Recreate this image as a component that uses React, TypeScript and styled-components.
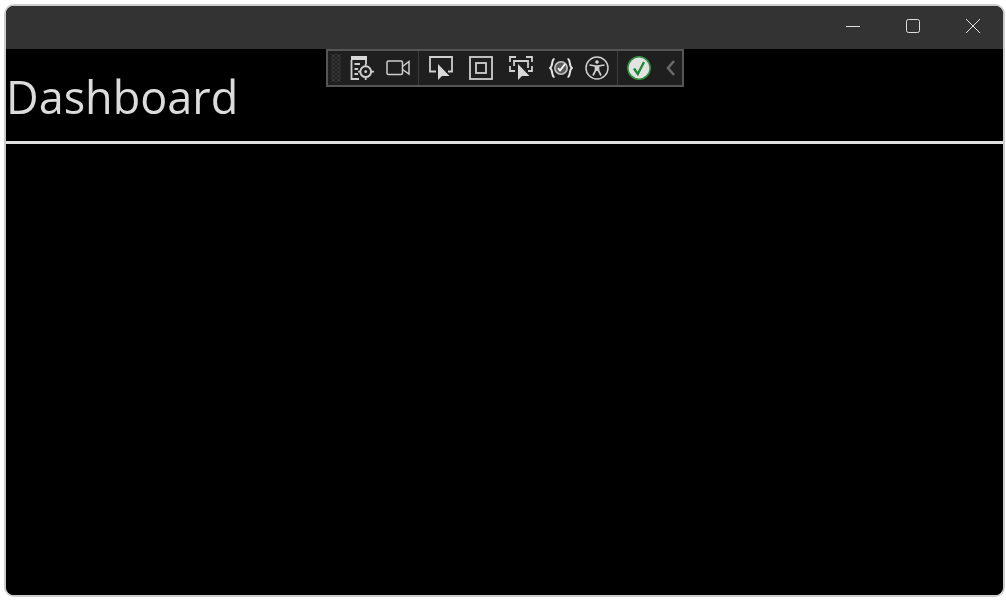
import styled, { createGlobalStyle } from "styled-components";

const GlobalStyle = createGlobalStyle`
  html, body {
    margin: 0;
    padding: 0;
    height: 100%;
    background: #ffffff;
    overflow: hidden;
  }
`;

const Page = styled.div`
  width: 1006px;
  height: 601px;
  box-sizing: border-box;
  padding: 4px 1px 4px 4px;
  display: flex;
`;

const Window = styled.div`
  position: relative;
  flex: 1;
  display: flex;
  flex-direction: column;
  box-sizing: border-box;
  border: 2px solid #cccccc;
  border-radius: 10px;
  background: #000000;
  overflow: hidden;
`;

const TitleBar = styled.div`
  height: 43px;
  flex-shrink: 0;
  background: #333333;
  display: flex;
  justify-content: flex-end;
`;

const WindowButton = styled.div`
  width: 60px;
  height: 40px;
  display: flex;
  align-items: center;
  justify-content: center;
  svg {
    width: 16px;
    height: 16px;
    stroke: #e0e0e0;
    stroke-width: 1;
    fill: none;
  }
`;

const Content = styled.div`
  flex: 1;
  background: #000000;
`;

const Heading = styled.h1`
  margin: 0;
  height: 95px;
  box-sizing: border-box;
  padding: 17px 0 0 0;
  border-bottom: 3px solid #e0e0e0;
  font-family: "Open Sans", "Noto Sans", sans-serif;
  font-size: 45px;
  line-height: 61px;
  font-weight: 400;
  color: #dcdcdc;
`;

const HeadingText = styled.span`
  display: inline-block;
  will-change: transform;
`;

const DebugToolbar = styled.div`
  position: absolute;
  left: 320px;
  top: 43px;
  width: 358px;
  height: 38px;
  box-sizing: border-box;
  border: 2px solid #555555;
  background: #1f1f1f;
  display: flex;
  align-items: center;
  padding-left: 3px;
`;

const Grip = styled.div`
  width: 10px;
  height: 28px;
  flex-shrink: 0;
  background-image:
    radial-gradient(circle, #3c3c3c 1px, transparent 1.3px),
    radial-gradient(circle, #3c3c3c 1px, transparent 1.3px);
  background-size: 5px 4px;
  background-position: 0 0, 2.5px 2px;
`;

const ToolIcon = styled.svg<{ $gap: number }>`
  width: 24px;
  height: 24px;
  flex-shrink: 0;
  margin-left: ${({ $gap }) => $gap}px;
  fill: none;
  stroke: #cfcfcf;
  stroke-width: 1.8;
`;

const Separator = styled.div<{ $gap: number }>`
  width: 1px;
  height: 34px;
  flex-shrink: 0;
  margin-left: ${({ $gap }) => $gap}px;
  background: #3d3d3d;
`;

const Cursor = () => <path d="M9 8 L9 24 L13 20 L20.5 20 Z" fill="#d8d8d8" stroke="none" />;

export default function App() {
  return (
    <>
      <GlobalStyle />
      <Page>
        <Window>
          <TitleBar>
            <WindowButton>
              <svg viewBox="0 0 16 16">
                <path d="M1 8.5 H15" />
              </svg>
            </WindowButton>
            <WindowButton>
              <svg viewBox="0 0 16 16">
                <rect x="1.5" y="1.5" width="13" height="13" rx="2" />
              </svg>
            </WindowButton>
            <WindowButton>
              <svg viewBox="0 0 16 16">
                <path d="M1 1 L15 15 M15 1 L1 15" />
              </svg>
            </WindowButton>
          </TitleBar>
          <Content>
            <Heading>
              <HeadingText>Dashboard</HeadingText>
            </Heading>
          </Content>
          <DebugToolbar>
            <Grip />
            <ToolIcon $gap={9} viewBox="0 0 24 24">
              <path d="M1.5 4 V23 H9" />
              <path d="M16 4 V8" />
              <rect x="1" y="0" width="16" height="4" fill="#d8d8d8" stroke="none" />
              <path d="M4.5 8 H10 M4.5 13 H8 M4.5 18 H8" />
              <circle cx="15.7" cy="15.7" r="5.4" strokeWidth="2" />
              <circle cx="15.7" cy="15.7" r="1.4" fill="#d8d8d8" stroke="none" />
              <path d="M15.7 8 V11 M15.7 20.5 V24 M8 15.7 H11 M20.5 15.7 H24" />
            </ToolIcon>
            <ToolIcon $gap={12} viewBox="0 0 24 24">
              <rect x="1" y="5" width="15.5" height="13.5" rx="1.5" strokeWidth="1.5" />
              <path d="M16.5 10.5 L23 5.5 V18 L16.5 13.5" strokeWidth="1.5" />
            </ToolIcon>
            <Separator $gap={8} />
            <ToolIcon $gap={10} viewBox="0 0 24 24">
              <path d="M7 15.5 H1 V1 H23 V15.5 H19" />
              <Cursor />
            </ToolIcon>
            <ToolIcon $gap={16} viewBox="0 0 24 24">
              <rect x="1" y="1" width="22" height="22" />
              <rect x="7" y="7" width="10" height="10" />
            </ToolIcon>
            <ToolIcon $gap={16} viewBox="0 0 24 24">
              <path d="M1 6 V1 H7 M17 1 H23 V6 M1 10 V15 H6 M23 10 V15 H19" />
              <path d="M5 10 V5 H19 V12" />
              <Cursor />
            </ToolIcon>
            <ToolIcon $gap={16} viewBox="0 0 24 24">
              <path d="M5.5 3 C2 3 4.5 10 1 12 C4.5 14 2 21 5.5 21" stroke="#e6e6e6" strokeWidth="2" />
              <path d="M18.5 3 C22 3 19.5 10 23 12 C19.5 14 22 21 18.5 21" stroke="#e6e6e6" strokeWidth="2" />
              <circle cx="12" cy="12" r="6.2" fill="#5a5a5a" stroke="#c4c4c4" strokeWidth="1.6" />
              <path d="M9 12 L11 14.5 L16 8" stroke="#ffffff" />
            </ToolIcon>
            <ToolIcon $gap={12} viewBox="0 0 24 24">
              <circle cx="12" cy="12" r="11" strokeWidth="1.5" />
              <circle cx="12" cy="6" r="1.8" fill="#d8d8d8" stroke="none" />
              <path d="M4.5 9 L10.5 10 V14.5 L8 19.5 M19.5 9 L13.5 10 V14.5 L16 19.5 M10.5 10 H13.5 M12 10 V15" strokeWidth="1.7" />
            </ToolIcon>
            <Separator $gap={8} />
            <ToolIcon $gap={9} viewBox="0 0 24 24">
              <circle cx="12" cy="12" r="11.2" fill="#e2e2e2" stroke="#2f8f3e" strokeWidth="1.6" />
              <path d="M7 12.5 L10.8 18 L17 6" stroke="#1f8a34" strokeWidth="2.4" />
            </ToolIcon>
            <ToolIcon $gap={9} viewBox="0 0 24 24">
              <path d="M14 5 L8 12 L14 19" stroke="#6a6a6a" strokeWidth="2.6" />
            </ToolIcon>
          </DebugToolbar>
        </Window>
      </Page>
    </>
  );
}
